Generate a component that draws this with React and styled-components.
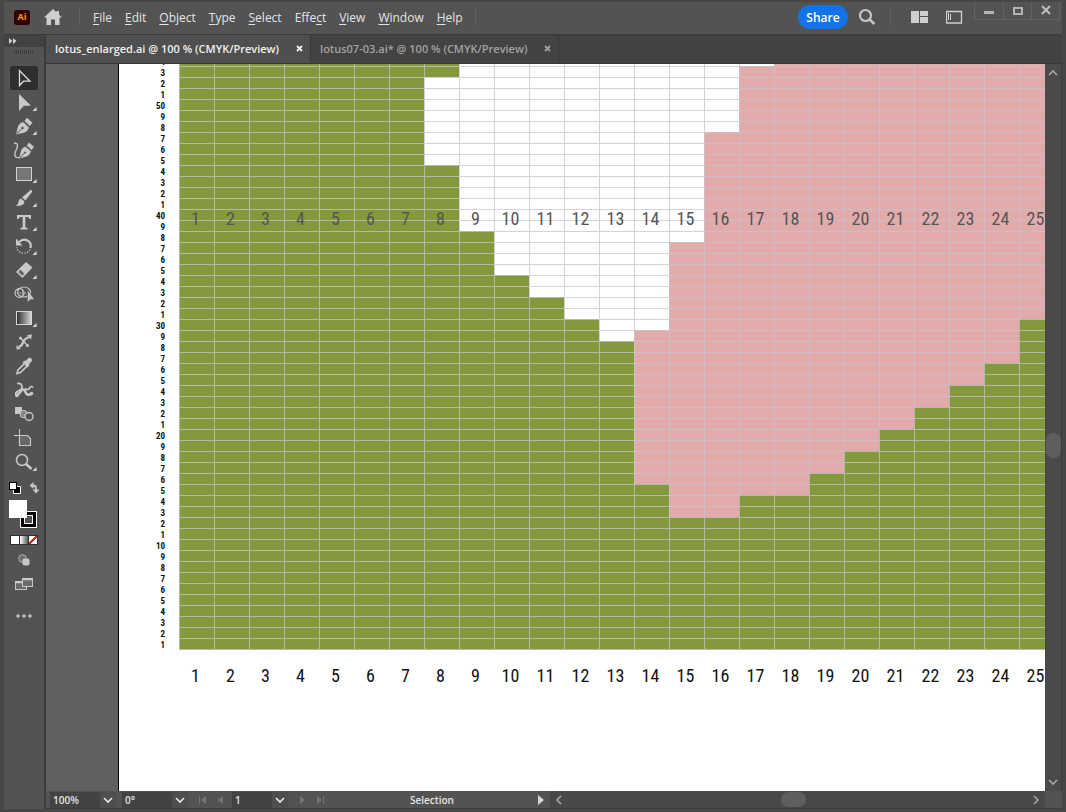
import React, { useState } from "react";
import styled, { createGlobalStyle, css } from "styled-components";

const UI_FONT = `"Open Sans", "Noto Sans", sans-serif`;
const CHART_FONT = `"Liberation Sans Narrow", "Roboto Condensed", "Open Sans", sans-serif`;

const ROWS = 54;
const COLS = 25;
const CELL_WIDTH = 35;
const CELL_HEIGHT = 11;

const COLORS = {
  green: "#84983c",
  white: "#ffffff",
  pink: "#e2abab",
};

// Runs of equal rows, from the top of the chart down: the last column of
// the left leaf, of the white petal and of the pink petal.
const BANDS = [
  { rows: 1, leaf: 8, petal: 17, pink: 25 },
  { rows: 1, leaf: 8, petal: 16, pink: 25 },
  { rows: 5, leaf: 7, petal: 16, pink: 25 },
  { rows: 3, leaf: 7, petal: 15, pink: 25 },
  { rows: 6, leaf: 8, petal: 15, pink: 25 },
  { rows: 1, leaf: 9, petal: 15, pink: 25 },
  { rows: 3, leaf: 9, petal: 14, pink: 25 },
  { rows: 2, leaf: 10, petal: 14, pink: 25 },
  { rows: 2, leaf: 11, petal: 14, pink: 25 },
  { rows: 1, leaf: 12, petal: 14, pink: 24 },
  { rows: 1, leaf: 12, petal: 13, pink: 24 },
  { rows: 2, leaf: 13, petal: 13, pink: 24 },
  { rows: 2, leaf: 13, petal: 13, pink: 23 },
  { rows: 2, leaf: 13, petal: 13, pink: 22 },
  { rows: 2, leaf: 13, petal: 13, pink: 21 },
  { rows: 2, leaf: 13, petal: 13, pink: 20 },
  { rows: 2, leaf: 13, petal: 13, pink: 19 },
  { rows: 1, leaf: 13, petal: 13, pink: 18 },
  { rows: 1, leaf: 14, petal: 14, pink: 18 },
  { rows: 2, leaf: 14, petal: 14, pink: 16 },
  { rows: 12, leaf: 25, petal: 25, pink: 25 },
];

const range = (n) => Array.from({ length: n }, (_, i) => i);

const columns = range(COLS).map((i) => i + 1);
const chartRows = BANDS.flatMap((band) => range(band.rows).map(() => band)).map(
  (band, index) => ({ ...band, number: ROWS - index })
);

const cellTone = (row, col) => {
  if (col <= row.leaf) return "green";
  if (col <= row.petal) return "white";
  if (col <= row.pink) return "pink";
  return "green";
};

const rowLabel = (n) => (n % 10 === 0 ? n : n % 10);

// [text before the access key, access key, text after]
const MENUS = [
  ["", "F", "ile"],
  ["", "E", "dit"],
  ["", "O", "bject"],
  ["", "T", "ype"],
  ["", "S", "elect"],
  ["Effe", "c", "t"],
  ["", "V", "iew"],
  ["", "W", "indow"],
  ["", "H", "elp"],
];

const FILES = [
  "lotus_enlarged.ai @ 100 % (CMYK/Preview)",
  "lotus07-03.ai* @ 100 % (CMYK/Preview)",
];

const TOOLS = [
  {
    name: "Selection",
    icon: <path d="M9.5 4.5V19.5L13.5 15.2H20Z" fill="none" stroke="#dcdcdc" strokeWidth="1.3" />,
  },
  { name: "Direct Selection", more: true, icon: <path d="M9 4V21L14 15.8H21Z" /> },
  {
    name: "Pen",
    more: true,
    icon: (
      <>
        <path d="M6 20.5L8 12.5Q9 9 13 8L19 13.5Q18 17 14.5 18.5Z" />
        <path d="M14.5 7L17 3.8L22.5 8.8L19.8 12Z" />
        <path d="M6.5 20L12 14.5" stroke="#535353" />
        <circle cx="12.5" cy="14" r="1.2" fill="#535353" />
      </>
    ),
  },
  {
    name: "Curvature",
    icon: (
      <>
        <path d="M9 20.5L11 13Q12 9.5 15.5 8.5L21 13.5Q20 17 16.5 18.5Z" />
        <path d="M16.8 7.5L19 4.5L24 8.8L21.6 12Z" />
        <path d="M9.500 20L14.5 15" stroke="#535353" />
        <circle cx="15" cy="14.5" r="1" fill="#535353" />
        <path d="M4 5.500Q7.500 4.500 7.500 7.500Q7.500 10 5.500 13.500Q4 18 6 19Q7.500 20 9.500 19.500" fill="none" stroke="#c8c8c8" strokeWidth="1.4" />
      </>
    ),
  },
  {
    name: "Rectangle",
    more: true,
    icon: <rect x="6.5" y="5.5" width="15" height="13" fill="#777" stroke="#d0d0d0" />,
  },
  {
    name: "Paintbrush",
    more: true,
    icon: (
      <>
        <path d="M20.5 4Q22.5 3.5 22 6L15.5 14.5L12 11.5Z" />
        <path d="M11 12.5L14.5 15.5Q14.5 20 6 20Q8.5 18.5 8.5 15.5Q9 13 11 12.5Z" />
      </>
    ),
  },
  {
    name: "Type",
    more: true,
    icon: <path d="M7 5H21V9H19.5Q19.300 7 17.500 7H15.300V17.500L17.500 18V19.500H10.500V18L12.700 17.500V7H10.500Q8.700 7 8.500 9H7Z" />,
  },
  {
    name: "Rotate",
    more: true,
    icon: (
      <>
        <path d="M9 8Q14 3.5 19 7.500Q21.500 10 20.5 14" fill="none" stroke="#c8c8c8" strokeWidth="2.2" />
        <path d="M6 4.500V11.500H12.500Z" />
        <path d="M20 15.5Q17 20 12 19Q8 18 6.5 13.5" fill="none" stroke="#c8c8c8" strokeWidth="1.3" strokeDasharray="1.3 1.5" />
      </>
    ),
  },
  {
    name: "Eraser",
    more: true,
    icon: (
      <>
        <path d="M6 14L16 4L22.5 9.5L12.5 20Z" />
        <path d="M8.2 14L10.5 11.7L14.5 15.5L12.3 17.7Z" fill="#686868" />
      </>
    ),
  },
  {
    name: "Shape Builder",
    icon: (
      <>
        <ellipse cx="14" cy="10" rx="6.5" ry="5" fill="none" stroke="#c8c8c8" strokeWidth="1.2" />
        <ellipse cx="9.5" cy="11" rx="4.5" ry="4.300" fill="none" stroke="#c8c8c8" strokeWidth="1.2" />
        <path d="M7 11H16M12.5 7V15" fill="none" stroke="#c8c8c8" strokeDasharray="1.5 1" />
        <path d="M17.500 8V20.500L20.300 17.500H24.500Z" stroke="#535353" strokeWidth="0.500" />
      </>
    ),
  },
  {
    name: "Gradient",
    more: true,
    icon: <rect x="6.5" y="5.5" width="15" height="13" fill="url(#toolGradient)" stroke="#d8d8d8" />,
  },
  {
    name: "Width",
    icon: (
      <>
        <path d="M9 17Q12.500 15 13 12.500Q14 9 19 7" fill="none" stroke="#c8c8c8" strokeWidth="2.4" />
        <path d="M10.500 8L17.500 15.500" stroke="#c8c8c8" strokeWidth="1.3" />
        <path d="M17 5L22 4.500L21 9.500ZM6.5 15L11 19L6.500 19.500Z" />
        <circle cx="10.500" cy="8" r="1.5" />
        <circle cx="17.500" cy="15.500" r="1.5" />
      </>
    ),
  },
  {
    name: "Eyedropper",
    icon: (
      <>
        <path d="M7 19.5L8 16L15.5 8.5L18 11L10.500 18.500Z" fill="none" stroke="#c8c8c8" strokeWidth="1.7" />
        <path d="M14 7L16 6.5L18.5 4Q22 3 22 7L19.5 9.5L19 12L17.5 13.5L12.5 8.5Z" />
      </>
    ),
  },
  {
    name: "Puppet Warp",
    icon: (
      <>
        <path d="M7 5.500Q11 4.500 12 8Q12.500 11 8 13Q5 14.500 6 16.500" fill="none" stroke="#c8c8c8" strokeWidth="1.7" />
        <path d="M5.500 18Q9 16 11 13Q14 9.500 15.500 14Q17 18 21 16" fill="none" stroke="#c8c8c8" strokeWidth="2.6" />
        <path d="M15 10.500Q18 13 20 9.500Q21.500 7.500 23 9.500" fill="none" stroke="#c8c8c8" strokeWidth="1.7" />
        <circle cx="7" cy="17.5" r="1.800" />
        <circle cx="21.500" cy="15.5" r="1.800" />
      </>
    ),
  },
  {
    name: "Blend",
    icon: (
      <>
        <rect x="5" y="5" width="7" height="7" />
        <rect x="10.5" y="8.5" width="6" height="7" rx="2" fill="#858585" stroke="#c8c8c8" />
        <circle cx="19" cy="14.5" r="4" fill="#535353" stroke="#c8c8c8" strokeWidth="1.4" />
      </>
    ),
  },
  {
    name: "Artboard",
    icon: (
      <>
        <path d="M9.5 9.5H17.5L20.5 12.5V19.5H9.5Z" fill="#686868" stroke="#c8c8c8" strokeWidth="1.2" />
        <path d="M9.5 3V9.5M4 9.5H9.5" fill="none" stroke="#c8c8c8" />
      </>
    ),
  },
  {
    name: "Zoom",
    more: true,
    icon: (
      <>
        <circle cx="12" cy="10" r="5.5" fill="none" stroke="#c8c8c8" strokeWidth="1.5" />
        <path d="M16 14L21.5 19" stroke="#c8c8c8" strokeWidth="2.6" />
      </>
    ),
  },
];

const Chevron = ({ points = "1,3 5,7 9,3", color = "#e6e6e6" }) => (
  <svg width="10" height="10" viewBox="0 0 10 10" aria-hidden="true">
    <polyline points={points} fill="none" stroke={color} strokeWidth="1.6" />
  </svg>
);

const Close = () => (
  <svg width="7" height="7" viewBox="0 0 7 7" aria-hidden="true">
    <path d="M1 1L6 6M6 1L1 6" stroke="currentColor" strokeWidth="1.8" />
  </svg>
);

const StepIcon = ({ end, back }) => (
  <svg width="10" height="10" viewBox="0 0 10 10" aria-hidden="true">
    <g fill="#747474" transform={back ? "rotate(180 5 5)" : undefined}>
      <path d="M2 1L7 5L2 9Z" />
      {end && <rect x="8" y="1" width="1" height="8" />}
    </g>
  </svg>
);

const Combo = ({ label, value, options, width }) => (
  <ComboBox $width={width}>
    <select aria-label={label} defaultValue={value}>
      {options.map((option) => (
        <option key={option}>{option}</option>
      ))}
    </select>
    <ComboArrow>
      <Chevron />
    </ComboArrow>
  </ComboBox>
);

const ColumnNumbers = () => columns.map((col) => <ColumnNumber key={col}>{col}</ColumnNumber>);

const App = () => {
  const [activeFile, setActiveFile] = useState(0);
  const [activeTool, setActiveTool] = useState("Selection");

  return (
    <>
      <GlobalStyle />
      <Window>
        <MenuBar>
          <Brand>Ai</Brand>
          <IconButton aria-label="Home">
            <svg width="20" height="18" viewBox="0 0 20 18" fill="#cfcfcf">
              <path d="M10 1L1 9.5H3.5V17H8V11.5H12V17H16.5V9.5H19L16 6.6V3H13.5V4.3Z" />
            </svg>
          </IconButton>
          <Divider $left={16} />
          <Menus>
            {MENUS.map(([before, key, after]) => (
              <MenuButton key={before + key + after}>
                {before}
                <u>{key}</u>
                {after}
              </MenuButton>
            ))}
          </Menus>
          <Divider $left={12} />
          <BarRight>
            <ShareButton>Share</ShareButton>
            <IconButton aria-label="Search">
              <svg width="18" height="18" viewBox="0 0 18 18">
                <circle cx="7.5" cy="7.5" r="5.5" fill="none" stroke="#c4c4c4" strokeWidth="2.2" />
                <path d="M11.5 11.5L16.5 16" stroke="#c4c4c4" strokeWidth="2.6" />
              </svg>
            </IconButton>
            <Divider $left={14} />
            <IconButton aria-label="Arrange documents" $left={20}>
              <svg width="18" height="14" viewBox="0 0 18 14" fill="#cfcfcf">
                <path d="M0 1H8V13H0ZM9 1H17V6H9ZM9 7H17V13H9Z" />
              </svg>
            </IconButton>
            <IconButton aria-label="Switch workspace" $left={17}>
              <svg width="17" height="14" viewBox="0 0 17 14" fill="none" stroke="#cfcfcf">
                <path d="M0.5 1.5H15.5V13H0.5Z" strokeWidth="1.3" />
                <path d="M2.5 3V10M4.5 4V10" />
              </svg>
            </IconButton>
            <WindowControls>
              <ControlButton aria-label="Minimize">
                <svg width="12" height="12" viewBox="0 0 12 12">
                  <rect x="1" y="6" width="10" height="3" fill="#b4b4b4" />
                </svg>
              </ControlButton>
              <ControlButton aria-label="Maximize">
                <svg width="12" height="12" viewBox="0 0 12 12">
                  <rect x="2" y="3" width="8" height="6" fill="none" stroke="#b4b4b4" strokeWidth="2" />
                </svg>
              </ControlButton>
              <ControlButton aria-label="Close window">
                <svg width="12" height="12" viewBox="0 0 12 12">
                  <path d="M2 1L10 9M10 1L2 9" stroke="#c0c0c0" strokeWidth="2" />
                </svg>
              </ControlButton>
            </WindowControls>
          </BarRight>
        </MenuBar>

        <Body>
          <ToolPanel>
            <PanelHeader aria-label="Expand panel">
              <svg width="8" height="6" viewBox="0 0 8 6" fill="#d0d0d0">
                <path d="M0 0L3.5 3L0 6ZM4 0L7.5 3L4 6Z" />
              </svg>
            </PanelHeader>
            <Grip />
            <Tools>
              {TOOLS.map(({ name, more, icon }) => (
                <ToolButton
                  key={name}
                  aria-label={name}
                  $active={activeTool === name}
                  onClick={() => setActiveTool(name)}
                >
                  <svg width="28" height="24" viewBox="0 0 28 24" fill="#c8c8c8">
                    <defs>
                      <linearGradient id="toolGradient">
                        <stop offset="0" stopColor="#2c2c2c" />
                        <stop offset="1" stopColor="#d8d8d8" />
                      </linearGradient>
                    </defs>
                    {icon}
                    {more && <path d="M26.5 17V21H22.5Z" fill="#dcdcdc" />}
                  </svg>
                </ToolButton>
              ))}
            </Tools>
            <SwatchButton aria-label="Fill and stroke">
              <svg width="32" height="52" viewBox="0 0 32 52">
                <path d="M5.5 5.5H12.5V12.5H5.5Z" fill="#000" stroke="#fff" />
                <rect x="1.5" y="1.5" width="7" height="7" fill="#fff" stroke="#000" />
                <path d="M25 4.500Q28 4.500 28 7V9" fill="none" stroke="#c8c8c8" strokeWidth="1.8" />
                <path d="M21.500 4.500L25.500 1V8ZM24.500 8.500H31.500L28 12.500Z" fill="#c8c8c8" />
                <rect x="12.5" y="30.5" width="16" height="16" fill="#000" stroke="#fff" />
                <rect x="16.5" y="34.5" width="8" height="8" fill="#535353" stroke="#fff" />
                <rect x="1" y="19" width="18" height="18" fill="#fff" />
              </svg>
            </SwatchButton>
            <ColorModes>
              <ModeButton aria-label="Color" $fill="#fff" />
              <ModeButton aria-label="Gradient fill" $fill="linear-gradient(90deg, #fff, #555)" />
              <ModeButton
                aria-label="None"
                $fill="linear-gradient(135deg, #fff 40%, #d61f1f 40%, #d61f1f 60%, #fff 60%)"
              />
            </ColorModes>
            <PanelButton aria-label="Drawing mode">
              <svg width="12" height="12" viewBox="0 0 12 12">
                <circle cx="4.5" cy="4.5" r="3.8" fill="#6b6b6b" stroke="#b0b0b0" />
                <rect x="4.5" y="4.5" width="7" height="7" rx="2" fill="#c8c8c8" />
              </svg>
            </PanelButton>
            <PanelButton aria-label="Screen mode">
              <svg width="19" height="14" viewBox="0 0 19 14" fill="#6b6b6b" stroke="#c8c8c8">
                <rect x="0.5" y="4.5" width="11" height="8" />
                <rect x="7.5" y="1.5" width="10" height="8" />
                <path d="M0.5 5.5H7M7.5 2.5H17.5" strokeWidth="1.5" />
              </svg>
            </PanelButton>
            <PanelButton aria-label="Edit toolbar" $tall>
              <svg width="16" height="4" viewBox="0 0 16 4" fill="#c8c8c8">
                <circle cx="2" cy="2" r="1.7" />
                <circle cx="8" cy="2" r="1.7" />
                <circle cx="14" cy="2" r="1.7" />
              </svg>
            </PanelButton>
          </ToolPanel>

          <Workspace>
            <TabBar>
              {FILES.map((file, index) => (
                <Tab key={file} $active={activeFile === index}>
                  <TabName onClick={() => setActiveFile(index)}>{file}</TabName>
                  <TabClose aria-label={`Close ${file}`}>
                    <Close />
                  </TabClose>
                </Tab>
              ))}
            </TabBar>

            <Stage>
              <Pasteboard>
                <Artboard>
                  <Chart>
                    {chartRows.map((row) => (
                      <ChartRow key={row.number}>
                        <RowNumber>{rowLabel(row.number)}</RowNumber>
                        {columns.map((col) => (
                          <Cell key={col} $tone={cellTone(row, col)} />
                        ))}
                      </ChartRow>
                    ))}
                    <OverlayNumbers>
                      <ColumnNumbers />
                    </OverlayNumbers>
                  </Chart>
                  <FooterNumbers>
                    <ColumnNumbers />
                  </FooterNumbers>
                </Artboard>
              </Pasteboard>
              <VerticalScroll>
                <Chevron points="1,7 5,3 9,7" color="#a8a8a8" />
                <Spacer $grow={10} />
                <Thumb $vertical />
                <Spacer $grow={9} />
                <Chevron color="#a8a8a8" />
              </VerticalScroll>
            </Stage>

            <StatusBar>
              <Combo label="Zoom level" value="100%" options={["50%", "100%", "200%"]} width={66} />
              <Combo label="Rotation" value="0°" options={["0°", "45°", "90°"]} width={66} />
              <Steps>
                <StepButton aria-label="First artboard"><StepIcon back end /></StepButton>
                <StepButton aria-label="Previous artboard"><StepIcon back /></StepButton>
              </Steps>
              <Combo label="Artboard" value="1" options={["1"]} width={56} />
              <Steps>
                <StepButton aria-label="Next artboard"><StepIcon /></StepButton>
                <StepButton aria-label="Last artboard"><StepIcon end /></StepButton>
              </Steps>
              <StatusText>Selection</StatusText>
              <StepButton aria-label="Status options">
                <svg width="6" height="10" viewBox="0 0 6 10" fill="#d8d8d8">
                  <path d="M0 0L6 5L0 10Z" />
                </svg>
              </StepButton>
              <HorizontalScroll>
                <Chevron points="7,1 3,5 7,9" color="#a8a8a8" />
                <Spacer $grow={29} />
                <Thumb />
                <Spacer $grow={30} />
                <Chevron points="3,1 7,5 3,9" color="#a8a8a8" />
              </HorizontalScroll>
            </StatusBar>
          </Workspace>
        </Body>
      </Window>
    </>
  );
};

const GlobalStyle = createGlobalStyle`
  * {
    box-sizing: border-box;
  }
  body {
    margin: 0;
    background: #424242;
    font-family: ${UI_FONT};
  }
  button, select {
    margin: 0;
    padding: 0;
    border: 0;
    background: none;
    color: inherit;
    font: inherit;
  }
  svg {
    display: block;
    flex-shrink: 0;
  }
`;

const Window = styled.div`
  display: flex;
  flex-direction: column;
  height: 100vh;
  border: solid #474747;
  border-width: 2px 4px 3px;
  background: #535353;
  color: #e4e4e4;
  overflow: hidden;
`;

const MenuBar = styled.header`
  display: flex;
  align-items: center;
  flex-shrink: 0;
  height: 32px;
  padding: 0 0 2px 10px;
  font-size: 12px;
`;

const Brand = styled.div`
  width: 16px;
  height: 15px;
  margin-right: 13px;
  border-radius: 3px;
  background: #330000;
  color: #ff9a00;
  font-size: 9px;
  font-weight: 700;
  line-height: 14px;
  text-align: center;
`;

const IconButton = styled.button`
  display: flex;
  align-items: center;
  margin-left: ${({ $left }) => $left || 0}px;
`;

const Divider = styled.span`
  width: 1px;
  height: 18px;
  margin-left: ${({ $left }) => $left}px;
  background: #5f5f5f;
`;

const Menus = styled.nav`
  display: flex;
  gap: 13px;
  margin-left: 13px;
`;

const MenuButton = styled.button`
  white-space: nowrap;
  u {
    text-underline-offset: 2px;
  }
`;

const BarRight = styled.div`
  display: flex;
  align-items: center;
  align-self: stretch;
  margin-left: auto;
`;

const ShareButton = styled.button`
  width: 50px;
  height: 24px;
  margin-right: 10px;
  border-radius: 12px;
  background: #1473e6;
  color: white;
  font-weight: 600;
`;

const WindowControls = styled.div`
  display: flex;
  align-self: flex-start;
  margin: 0 2px 0 11px;
  border: solid #626262;
  border-width: 0 1px 1px;
`;

const ControlButton = styled.button`
  display: flex;
  align-items: center;
  justify-content: center;
  width: 28px;
  height: 17px;
  & + & {
    border-left: 1px solid #626262;
  }
`;

const Body = styled.div`
  display: flex;
  flex: 1;
  min-height: 0;
  border-top: 1px solid #3a3a3a;
`;

const ToolPanel = styled.aside`
  display: flex;
  flex-direction: column;
  align-items: center;
  flex-shrink: 0;
  width: 42px;
  border-right: 2px solid #3c3c3c;
`;

const PanelHeader = styled.button`
  display: flex;
  align-items: center;
  width: 100%;
  height: 12px;
  padding-left: 5px;
  background: #424242;
`;

const Grip = styled.div`
  width: 20px;
  height: 4px;
  margin: 3px 0 12px;
  background: repeating-linear-gradient(90deg, #3e3e3e 0 1px, #535353 1px 2px);
`;

const Tools = styled.div`
  display: flex;
  flex-direction: column;
`;

const ToolButton = styled.button`
  height: 24px;
  border-radius: 2px;
  background: ${({ $active }) => ($active ? "#2e2e2e" : "none")};
`;

const SwatchButton = styled.button`
  margin-top: 7px;
`;

const ColorModes = styled.div`
  display: flex;
  gap: 1px;
  margin: 2px 0 3px;
  border: 1px solid #2e2e2e;
  background: #2e2e2e;
`;

const ModeButton = styled.button`
  width: 8px;
  height: 8px;
  background: ${({ $fill }) => $fill};
`;

const PanelButton = styled.button`
  display: flex;
  align-items: center;
  justify-content: center;
  width: 28px;
  height: ${({ $tall }) => ($tall ? 40 : 24)}px;
`;

const Workspace = styled.main`
  display: flex;
  flex-direction: column;
  flex: 1;
  min-width: 0;
`;

const TabBar = styled.div`
  display: flex;
  flex-shrink: 0;
  height: 29px;
  background: #424242;
  border-bottom: 1px solid #383838;
`;

const Tab = styled.div`
  display: flex;
  align-items: center;
  gap: 17px;
  padding: 0 7px 2px 9px;
  border-right: 1px solid #383838;
  font-size: 11px;
  font-weight: 600;
  ${({ $active }) => css`
    background: ${$active ? "#4f4f4f" : "#434343"};
    color: ${$active ? "#f0f0f0" : "#a2a2a2"};
  `}
`;

const TabName = styled.button`
  white-space: nowrap;
`;

const TabClose = styled.button`
  display: flex;
`;

const Stage = styled.div`
  display: flex;
  flex: 1;
  min-height: 0;
`;

const Pasteboard = styled.div`
  display: flex;
  flex: 1;
  min-width: 0;
  padding-left: 72px;
  background: #606060;
`;

const Artboard = styled.div`
  display: flex;
  flex-direction: column;
  justify-content: flex-end;
  flex: 1;
  min-width: 0;
  padding-bottom: 91px;
  border-left: 1px solid #000;
  background: white;
  color: #111;
  font-family: ${CHART_FONT};
  overflow: hidden;
`;

const Chart = styled.div`
  position: relative;
`;

const ChartRow = styled.div`
  display: flex;
  height: ${CELL_HEIGHT}px;
  &:nth-child(${ROWS}) {
    height: ${CELL_HEIGHT + 1}px;
  }
  &:nth-child(${ROWS}) > * + * {
    border-bottom-width: 1px;
  }
`;

const RowNumber = styled.div`
  flex-shrink: 0;
  width: 60px;
  padding-right: 14px;
  font-size: 9px;
  font-weight: 700;
  line-height: 14px;
  text-align: right;
`;

const Cell = styled.div`
  flex-shrink: 0;
  width: ${CELL_WIDTH}px;
  border: solid rgba(196, 196, 204, 0.75);
  border-width: 1px 0 0 1px;
  background: ${({ $tone }) => COLORS[$tone]};
`;

const NumberRow = styled.div`
  display: flex;
  align-items: center;
  padding-left: 59px;
  font-size: 18px;
`;

// Repeats the column numbers across rows 39 and 40
const OverlayNumbers = styled(NumberRow)`
  position: absolute;
  left: 0;
  bottom: 422px;
  height: 20px;
  color: #555;
`;

const FooterNumbers = styled(NumberRow)`
  flex-shrink: 0;
  height: 50px;
`;

const ColumnNumber = styled.span`
  flex-shrink: 0;
  width: ${CELL_WIDTH}px;
  text-align: center;
`;

const VerticalScroll = styled.div`
  display: flex;
  flex-direction: column;
  align-items: center;
  width: 17px;
  padding: 4px 0;
  background: #4a4a4a;
  border-right: 1px solid #3c3c3c;
`;

const Spacer = styled.span`
  flex: ${({ $grow }) => $grow};
`;

const Thumb = styled.div`
  width: ${({ $vertical }) => ($vertical ? 15 : 25)}px;
  height: ${({ $vertical }) => ($vertical ? 25 : 15)}px;
  border-radius: 7px;
  background: #5e5e5e;
`;

const StatusBar = styled.footer`
  display: flex;
  align-items: center;
  gap: 6px;
  flex-shrink: 0;
  height: 18px;
  padding-left: 4px;
  border-bottom: 1px solid #3c3c3c;
  font-size: 10px;
  font-weight: 600;
`;

const ComboBox = styled.div`
  display: grid;
  align-items: center;
  flex-shrink: 0;
  width: ${({ $width }) => $width}px;
  height: 16px;
  background: #434343;
  select {
    grid-area: 1 / 1;
    padding-left: 3px;
    appearance: none;
  }
`;

const ComboArrow = styled.span`
  grid-area: 1 / 1;
  justify-self: end;
  padding: 3px;
  background: #4e4e4e;
  pointer-events: none;
`;

const Steps = styled.div`
  display: flex;
  gap: 7px;
  width: 32px;
  padding-left: 4px;
`;

const StepButton = styled.button`
  display: flex;
  flex-shrink: 0;
`;

const StatusText = styled.span`
  flex-shrink: 0;
  width: 200px;
  text-align: center;
`;

const HorizontalScroll = styled.div`
  display: flex;
  align-items: center;
  flex: 1;
  height: 17px;
  margin-right: 17px;
  padding: 0 4px;
  background: #484848;
`;

export default App;
